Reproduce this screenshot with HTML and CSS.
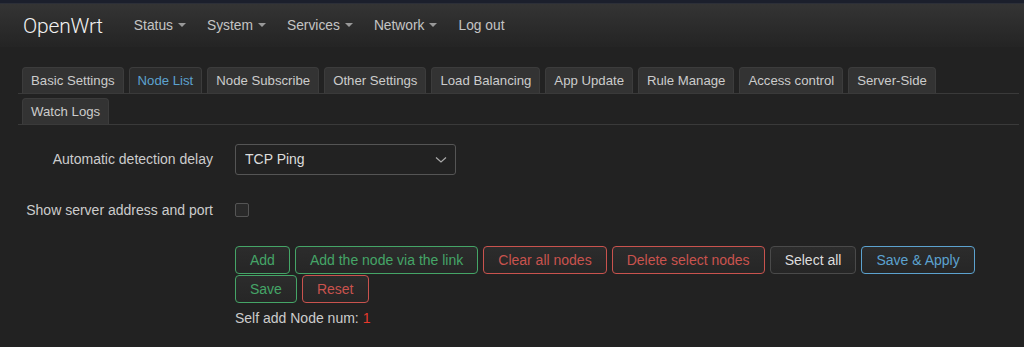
FILE: index.html
```html
<!DOCTYPE html>
<html lang="en">
<head>
    <meta charset="UTF-8">
    <meta name="viewport" content="width=device-width, initial-scale=1.0">
    <title>Node List - OpenWrt</title>
    <link rel="stylesheet" href="styles.css">
</head>
<body>
    <div class="topstrip"></div>
    <header class="navbar">
        <a class="brand" href="#">OpenWrt</a>
        <ul class="nav">
            <li class="dropdown">Status</li>
            <li class="dropdown">System</li>
            <li class="dropdown">Services</li>
            <li class="dropdown">Network</li>
            <li>Log out</li>
        </ul>
    </header>

    <div class="container">
        <ul class="tabs">
            <li>Basic Settings</li>
            <li class="active">Node List</li>
            <li>Node Subscribe</li>
            <li>Other Settings</li>
            <li>Load Balancing</li>
            <li>App Update</li>
            <li>Rule Manage</li>
            <li>Access control</li>
            <li>Server-Side</li>
        </ul>
        <ul class="tabs tabs-second">
            <li>Watch Logs</li>
        </ul>

        <div class="cbi-section">
            <div class="cbi-row">
                <label class="cbi-label" for="delay">Automatic detection delay</label>
                <div class="select-wrap">
                    <select id="delay">
                        <option>TCP Ping</option>
                        <option>ICMP Ping</option>
                    </select>
                    <svg class="chevron" width="12" height="8" viewBox="0 0 12 8"><path d="M1 1.5 L6 6 L11 1.5" fill="none" stroke="#aaa" stroke-width="1.2"/></svg>
                </div>
            </div>
            <div class="cbi-row row-check">
                <label class="cbi-label" for="show">Show server address and port</label>
                <input type="checkbox" id="show" class="check">
            </div>

            <div class="actions">
                <div class="btn-row">
                    <button class="btn green">Add</button>
                    <button class="btn green">Add the node via the link</button>
                    <button class="btn red">Clear all nodes</button>
                    <button class="btn red">Delete select nodes</button>
                    <button class="btn plain">Select all</button>
                    <button class="btn blue">Save &amp; Apply</button>
                </div>
                <div class="btn-row">
                    <button class="btn green">Save</button>
                    <button class="btn red">Reset</button>
                </div>
                <p class="node-num">Self add Node num: <span>1</span></p>
            </div>
        </div>
    </div>
</body>
</html>
```

FILE: styles.css
```css
:root {
    --bg: #222222;
    --text: #cccccc;
    --tab-bg: #333333;
    --line: #3a3a3a;
    --green: #45a567;
    --red: #c9534e;
    --blue: #5ca2cf;
}

* {
    margin: 0;
    padding: 0;
    box-sizing: border-box;
}

body {
    background-color: var(--bg);
    color: var(--text);
    font-family: 'Liberation Sans', Arial, sans-serif;
    font-size: 14px;
}

ul {
    list-style: none;
}

.topstrip {
    height: 4px;
    background: #1b1f2c;
    border-bottom: 1px solid #2c2f38;
}

.navbar {
    height: 43px;
    display: flex;
    align-items: center;
    padding-left: 23px;
    background: linear-gradient(#343434, #242424);
}

.brand {
    font-family: 'Roboto', sans-serif;
    font-weight: 300;
    font-size: 21px;
    color: #f2f2f2;
    text-decoration: none;
    margin-right: 31px;
    letter-spacing: -0.2px;
}

.nav {
    display: flex;
    gap: 21px;
}

.nav li {
    color: #c4c4c4;
    font-size: 13.8px;
}

.nav .dropdown::after {
    content: "";
    display: inline-block;
    margin-left: 5px;
    vertical-align: 3px;
    border-left: 4px solid transparent;
    border-right: 4px solid transparent;
    border-top: 4px solid #999;
}

.container {
    padding: 20px 5px 0 18px;
}

.tabs {
    display: flex;
    gap: 5px;
    padding-left: 4px;
    border-bottom: 1px solid var(--line);
}

.tabs li {
    height: 26px;
    line-height: 25px;
    padding: 0 8px;
    font-size: 13.2px;
    background: var(--tab-bg);
    border: 1px solid #3c3c3c;
    border-bottom: none;
    border-radius: 4px 4px 0 0;
    color: var(--text);
}

.tabs li.active {
    background: #2c2c2c;
    color: var(--blue);
}

.tabs-second {
    margin-top: 4px;
}

.cbi-section {
    padding-top: 19px;
}

.cbi-row {
    display: flex;
    align-items: center;
    height: 30px;
}

.cbi-label {
    width: 195px;
    text-align: right;
    margin-right: 22px;
    color: var(--text);
}

.row-check {
    margin-top: 21px;
}

.select-wrap {
    position: relative;
    width: 221px;
}

.select-wrap select {
    appearance: none;
    width: 100%;
    height: 31px;
    padding: 0 9px;
    background: var(--bg);
    color: #dddddd;
    border: 1px solid #555555;
    border-radius: 3px;
    font-family: inherit;
    font-size: 14px;
}

.chevron {
    position: absolute;
    right: 9px;
    top: 12px;
}

.check {
    appearance: none;
    width: 14px;
    height: 14px;
    border: 1px solid #555555;
    border-radius: 2px;
    background: #2a2a2a;
}

.actions {
    padding: 21px 0 0 217px;
}

.btn-row {
    display: flex;
    gap: 5px;
}

.btn-row + .btn-row {
    margin-top: 1px;
}

.btn {
    height: 28px;
    padding: 0 14px;
    background: linear-gradient(#2c2c2c, #262626);
    border: 1px solid;
    border-radius: 4px;
    font-family: inherit;
    font-size: 14px;
}

.btn.green {
    color: var(--green);
    border-color: var(--green);
}

.btn.red {
    color: var(--red);
    border-color: var(--red);
}

.btn.blue {
    color: var(--blue);
    border-color: var(--blue);
}

.btn.plain {
    color: #dddddd;
    border-color: #4a4a4a;
}

.node-num {
    margin-top: 7px;
    color: var(--text);
}

.node-num span {
    color: #e8392c;
}
```
